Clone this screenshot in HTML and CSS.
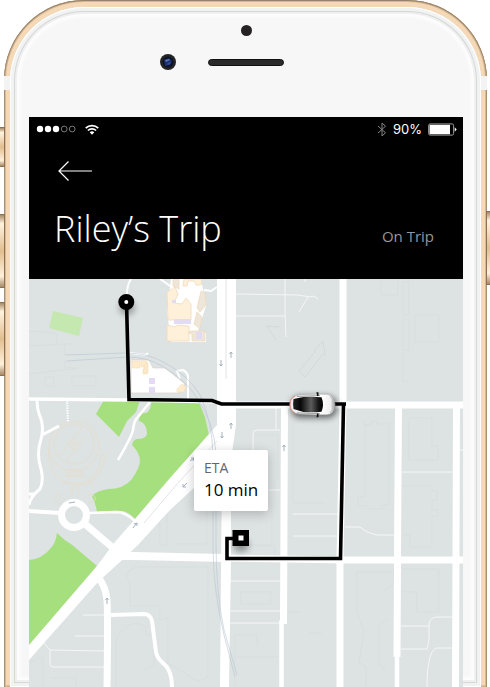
FILE: index.html

```html
<!DOCTYPE html>
<html lang="en">
<head>
<meta charset="utf-8">
<meta name="viewport" content="width=device-width, initial-scale=1">
<title>Riley’s Trip</title>
<link rel="stylesheet" href="styles.css">
</head>
<body>
<div class="device">
  <span class="key key-mute"></span>
  <span class="key key-up"></span>
  <span class="key key-down"></span>
  <span class="key key-power"></span>
  <span class="antenna antenna-left"></span>
  <span class="antenna antenna-right"></span>
  <div class="glass">
    <div class="bezel">
      <span class="sensor"></span>
      <svg class="camera" width="16" height="16" viewBox="0 0 16 16" aria-hidden="true">
        <circle cx="8" cy="8" r="8" fill="#242426"/>
        <circle cx="8" cy="8" r="5.4" fill="#0d1226"/>
        <path d="M4 6l5-2 3 3-2 4-5 1z" fill="#1c3070"/>
        <path d="M5 6l4-1 1 1-4 2z" fill="#5579ad"/>
        <path d="M7 10l3-2 1 1-3 2z" fill="#3551a8"/>
      </svg>
      <span class="speaker"></span>
    </div>
    <main class="screen">
      <header class="header">
        <div class="status">
          <svg width="40" height="8" viewBox="0 0 40 8" aria-label="Signal" role="img">
            <g fill="#fff"><circle cx="4" cy="4" r="3.2"/><circle cx="12" cy="4" r="3.2"/><circle cx="20" cy="4" r="3.2"/></g>
            <g fill="none" stroke="#aaa" stroke-width=".7"><circle cx="28.2" cy="4" r="2.9"/><circle cx="36.2" cy="4" r="2.9"/></g>
          </svg>
          <svg class="wifi" width="14" height="11" viewBox="0 0 14 11" aria-label="Wi-Fi" role="img">
            <g fill="none" stroke="#fff" stroke-width="1.7"><path d="M.7 4.1a9 9 0 0 1 12.6 0"/><path d="M2.9 6.5a6 6 0 0 1 8.2 0"/></g>
            <path d="M4.7 8.3a3.3 3.3 0 0 1 4.6 0L7 10.7z" fill="#fff"/>
          </svg>
          <svg class="bluetooth" width="10" height="15" viewBox="0 0 10 15" aria-label="Bluetooth" role="img">
            <path d="M1 4l7.5 6.8L5 14V1l3.5 3.2L1 11" fill="none" stroke="#858585" stroke-width="1"/>
          </svg>
          <span class="level">90%</span>
          <svg width="29" height="13" viewBox="0 0 29 13" aria-label="Battery" role="img">
            <rect x=".6" y=".9" width="25" height="11.2" rx="1.5" fill="none" stroke="#999" stroke-width="1"/>
            <rect x="1.5" y="1.8" width="20.5" height="9.4" fill="#fff"/>
            <path d="M26.7 4.3l2 2.2-2 2.2z" fill="#fff"/>
          </svg>
        </div>
        <button class="back" type="button" aria-label="Back">
          <svg width="36" height="22" viewBox="0 0 36 22" aria-hidden="true">
            <path d="M35 11H2M11.5 1.5L2 11l9.5 9.5" fill="none" stroke="#fff" stroke-width="1.2"/>
          </svg>
        </button>
        <div class="heading">
          <h1 class="title">Riley’s Trip</h1>
          <span class="state">On Trip</span>
        </div>
      </header>
      <section class="map" aria-label="Trip map">
        <svg class="map-art" viewBox="29 279 434 408" aria-hidden="true">
          <defs>
            <filter id="soft" x="-50%" y="-50%" width="200%" height="200%"><feGaussianBlur stdDeviation="3"/></filter>
            <linearGradient id="roof" x1="0" x2="1"><stop offset="0" stop-color="#222"/><stop offset=".25" stop-color="#080808"/><stop offset=".6" stop-color="#5c5c5c"/><stop offset=".85" stop-color="#161616"/><stop offset="1" stop-color="#000"/></linearGradient>
            <linearGradient id="body" x1="0" x2="1"><stop offset="0" stop-color="#eee"/><stop offset=".7" stop-color="#fff"/><stop offset=".9" stop-color="#eee"/><stop offset="1" stop-color="#999"/></linearGradient>
          </defs>
          <rect x="29" y="279" width="434" height="408" fill="#dde2e2"/>

          <!-- faint building outlines -->
          <g fill="none" stroke="#d6dcdc" stroke-width=".7">
            <path d="M29 331l27 2 1 11M29 346l36-2M75 344H65v12M75 368H65v-8M29 374l50-6M45 377h9v9h-9zM72 376h24v10H72z"/>
            <path d="M299 371l16-19-1-1 9-10 2 14-2-1-18 23zM276 340l-9-14 12 1" stroke="#cfd6d6"/>
            <path d="M381 280v15h17v-13M403 282h6v33h-6zM403 320h6v30h-6zM403 354v27h5M415 315h24v27h-24z"/>
            <path d="M365 425l6-1v-3h6v3h12v81h-7v4h-14v-3h-10v-9h7v-42zM409 418h23v28h6v14h-29zM402 486h30v5h5v9h-5v10h6v6h-6v31h-22v-12h-7"/>
            <path d="M293 421v82h32M362 421l3 4M256 435h22v45M199 501h8v43h-30M272 501v44h-30M167 445v100h-7v-60"/>
            <path d="M135 567h73v110q-10 8-20-2l-20-12v-45l-8 2v-14h-30v-22q-10-10 5-17M116 687v-45q3-10 10-15 10-7 20 0v8h8v30l-9 5M241 592h30v12h-30zM235 635h22v11M235 687v-52M235 657h43M255 546h20v12M366 687v-20l-7-5 5-30-7-20v-40h37v12l-10 6M402 569h37v43h-22v-20h-14M386 670l-7-5v-40l10-6M43 687v-30l-13 5M51 678h25v9M287 612h14M309 633h13"/>
          </g>

          <!-- parks -->
          <path d="M53 311l30 7-4 18-30-8z" fill="#c5e8b1"/>
          <g fill="#a6df7d">
            <path d="M104 400h36l-4 12-9 9-8 16-23-23z"/>
            <path d="M152 400h46l7 17 4 18-39 45-35 39q-6-7-12-8-12-1-26 1-1-8-5-16 4-5 16-7 16 0 24-10 8-12 8-18 0-8-8-16 1-5 5-6 9 0 10-5 0-11-8-13-1-3 4-8 8 2 9-16z"/>
            <path d="M57 533q8 8 14 11l26 22-68 80v-86q13-1 21-11 6-6 7-16z"/>
          </g>

          <!-- stadium -->
          <g fill="none" stroke="#e6ddcc" stroke-width=".8">
            <circle cx="74" cy="446" r="25"/><circle cx="74" cy="444" r="20"/><circle cx="74" cy="444" r="5"/><circle cx="74" cy="444" r="2"/>
            <path d="M49 449q-2 22 12 31 11 8 21 4 19-8 19-29h4q-1 19-17 28M60 455l22-27M66 461l21-25M68 470l-2 6h18l-4-6zM70 470v7m3-7v7m4-7v7m3-7v7M72 485v10M78 485v10M65 500q-7-8-10-3t10 8M84 498q8-8 12 1l-8 5M62 481l25 4 9-7"/>
          </g>

          <!-- campus buildings -->
          <path d="M171 279h30l3 15 2 12-8 25 8 2v9h-35l-4-30z" fill="#fff"/>
          <g fill="#fff0da" stroke="#efdabb" stroke-width=".8">
            <path d="M167 292l8-5 3 7-4 9 8 1 4-6 5 6v16h-23z"/><path d="M167 325l7 2 4-2 11 1v15h-22z"/>
            <path d="M184 279h18l-1 6h-5l-2-4h-6l-1 5h-4z"/>
          </g>
          <path d="M173 279v7l6 3v-10zM201 291l4 2 1 12-6 7-3-4zM197 312l5 5-2 12-6-5zM190 331h15v10h-13v-7l-4-1z" fill="#eee6d8" stroke="#efd8b8" stroke-width=".7"/>
          <path d="M174 319h17v5h-17zM196 332h6v7h-6zM172 300h4v3h-4z" fill="#e3daf3"/>
          <path d="M131 360h18l4 8h12l20 16-7 9h-47z" fill="#fff" stroke="#ddd3ca" stroke-width=".7"/>
          <g fill="#ffebcd" stroke="#f3ddbb" stroke-width=".6"><path d="M132 361h8v7h-8zM141 361h6v6h-6zM143 369h4v5h-4zM144 364l4-1v10h-4zM177 389l5-5 4 3-2 5h-7z"/></g>
          <path d="M149 378h6v6h-6zM149 387h6v6h-6z" fill="#e5daf5"/>

          <!-- side streets -->
          <g fill="none" stroke="#f5f7f7" stroke-width="1">
            <path d="M236 294l62 1 12 2 4-1 4 3M308 297l-9 15M285 279v34l1 24M236 316h49M305 279v3"/>
            <path d="M280 430h-23q-4 0-4 4v18M276 408v22M268 490h12M293 514h46M293 536h46M345 527h15l7 5 10 3h17M402 472h50M460 450h3"/>
            <path d="M230 581h50M230 611h50M230 623h50M401 626h28M452 617h-15q-6 0-8 6v17l-2 9h-26M452 648h-15q-6 1-8 14-2 7-2 25"/>
            <path d="M83 615h22M75 636h30M44 643l6 7 54 1M50 650v14q0 3 3 3h51"/>
          </g>
          <g fill="none" stroke="#fff" stroke-width="2">
            <path d="M131 279q-4 6-4 15M160 279l13 9M204 290l7 1 6-4M130 353l16 2 2-2M180 379l-3-8 6-1q4 2 5 6v24"/>
            <path d="M67 400l1 22" stroke-dasharray="1.5 1"/>
          </g>

          <!-- streets -->
          <g fill="none" stroke="#fff">
            <path d="M29 399l101 1 90 2" stroke-width="3.5"/>
            <path d="M37 400q0 10 4 19 3 10 0 20-5 15 0 30 3 12-1 20-10 8-11 16M42 435l17-9M29 494h6" stroke-width="3"/>
            <path d="M150 402l-13 16q-3 3-4 12-2 8-15 30M89 513l28-1q8 0 18 9" stroke-width="2.6"/>
            <path d="M29 511l32 2" stroke-width="4"/>
            <circle cx="74" cy="515" r="12.5" stroke-width="7"/>
            <path d="M85 524l34 29" stroke-width="7"/>
            <path d="M220 405h243M225 558l120 2h118" stroke-width="7"/>
            <path d="M115 556h18l92 2" stroke-width="8"/>
            <path d="M95 575q10 7 12 25 1 15 0 87" stroke-width="7"/>
            <path d="M110 615l34-1q6 0 8 7l4 31q1 6 7 11 9 7 9 24" stroke-width="4"/>
            <path d="M284.5 405L283.5 624M343 279v126l-3 155v127M398.5 405l-1 155-.5 97M456.5 405l-1 282" stroke-width="7"/>
            <path d="M281.5 620v67M397 655v32" stroke-width="4.5"/>
          </g>
          <path d="M217 279h19v146l-5 35v100l-2 127h-9l2-225-52 48-32 35-18 17-22 20-69 78v-15l68-79 17-23 21-24 35-41 47-53z" fill="#fff"/>
          <path d="M144 523l34-40 39-42M226 279v100" fill="none" stroke="#d9dedf" stroke-width=".8"/>

          <!-- railway -->
          <g fill="none" stroke="#b8c7d2" stroke-width=".8" opacity=".75">
            <path d="M65 355l60-2q24 0 40 10 24 13 35 32 12 25 13 60v90q0 45 11 90l11 42"/>
            <path d="M67 361l60-4q20 0 35 9 24 14 35 32 17 25 19 55v90q0 50 8 87l13 45"/>
          </g>
          <g fill="none" stroke="#a4b4bd" stroke-width="1">
            <path d="M221 360v6m-1.5-2l1.5 2 1.5-2M231 358v-6m-1.5 2l1.5-2 1.5 2M231 429v-6m-1.5 2l1.5-2 1.5 2M222 432v6m-1.500-2l1.500 2 1.500-2M284 451v-6m-1.500 2l1.500-2 1.500 2M107 604v-6m-1.500 2l1.500-2 1.500 2M190 461l4-3m-3 0l3 0-1 3M187 483l-4 4m0-3v3h3M133 528l4-5m-3 1l3-1v3M69 503l6-1"/>
          </g>

          <!-- route -->
          <ellipse cx="127" cy="308" rx="8" ry="7" fill="#000" opacity=".3" filter="url(#soft)"/>
          <ellipse cx="241" cy="545" rx="8" ry="7" fill="#000" opacity=".35" filter="url(#soft)"/>
          <path d="M126.500 302l2.500 97.500 83 1 9.500 3.500H346M343.500 404l-3 154.500H227v-20h14" fill="none" stroke="#000" stroke-width="3.600"/>
          <circle cx="126.300" cy="302" r="5" fill="#fff" stroke="#000" stroke-width="6"/>
          <path d="M232.500 530h16.500v16h-16.500z"/>
          <path d="M238.500 535.500h5v5h-5z" fill="#fff"/>

          <!-- car -->
          <rect x="291" y="396" width="46" height="22" rx="9" fill="#000" opacity=".55" filter="url(#soft)"/>
          <path d="M290 404.500q0-8.500 9-9.500l17-.8h11q8 1 8 10.300t-8 10.300h-11l-17-.8q-9-1-9-9.500z" fill="url(#body)" stroke="#aaa" stroke-width=".5"/>
          <path d="M295 396q-5 2.500-5 8.500t5 8.500" fill="none" stroke="#e08a70" stroke-width=".9"/>
          <path d="M293.500 399l10-2q9-.8 18 .2 3 7.300 0 14.600-9 1-18 .2l-10-3q-.8-5 0-10z" fill="url(#roof)"/>
          <path d="M297 396.500l23-1M297 412.800l23 1" stroke="#666" stroke-width=".6"/>
          <path d="M316.500 392l2 .5v3.500h-1.500zM316.500 417.500l2-.5v-3.500h-1.500z" fill="#111"/>
          <path d="M330 396q3.500 3 3.500 8.500t-3.500 8.500" fill="none" stroke="#bbb" stroke-width="1"/>
        </svg>
        <div class="eta">
          <span class="eta-label">ETA</span>
          <strong class="eta-value">10 min</strong>
        </div>
      </section>
    </main>
  </div>
</div>
</body>
</html>
```

FILE: styles.css

```css
* {
  box-sizing: border-box;
}

body {
  margin: 0;
  background: #fff;
  font-family: "Open Sans", "Noto Sans", sans-serif;
  overflow-x: hidden;
}

/* Phone shell */
.device {
  position: relative;
  min-height: 100vh;
  margin: 0 3px 0 4px;
  padding: 7px 6px 0;
  border-radius: 80px 80px 0 0;
  background: #f5d9b7;
  box-shadow: inset 0 1px 1px #927c64, inset 1px 0 1px #a58e72, inset -1px 0 1px #a58e72, inset 0 0 0 2px #dcbf9b;
}

.glass {
  min-height: calc(100vh - 7px);
  padding: 0 18px 0 19px;
  border-radius: 74px 74px 0 0;
  background: #f7f7f7;
  box-shadow: inset 0 0 0 1px #fff, inset 0 0 0 4px #f1f2f2, inset 0 0 0 5px #d5d7d8, inset 0 0 0 7px #f0f0f0, inset 0 0 3px 10px #fdfdfd;
}

.antenna {
  position: absolute;
  top: 76px;
  width: 6px;
  height: 14px;
  background: #f4f3f3;
}

.antenna-left {
  left: 0;
}

.antenna-right {
  right: 0;
}

.key {
  position: absolute;
  width: 5px;
  border: 1px solid #8b7254;
  background: linear-gradient(#a78a65, #fff3df 12%, #e2bf90 50%, #fff0dc 85%, #a78a65);
}

.key-mute {
  top: 127px;
  left: -4px;
  height: 40px;
  border-left: 0;
}

.key-up {
  top: 214px;
  left: -4px;
  height: 74px;
  border-left: 0;
}

.key-down {
  top: 302px;
  left: -4px;
  height: 74px;
  border-left: 0;
}

.key-power {
  top: 211px;
  right: -4px;
  height: 74px;
  border-right: 0;
}

.bezel {
  display: grid;
  grid-template-columns: 1fr 76px 1fr;
  column-gap: 32px;
  row-gap: 18px;
  align-items: center;
  height: 110px;
  padding-top: 18px;
  align-content: start;
}

.sensor {
  grid-column: 2;
  justify-self: center;
  width: 11px;
  height: 11px;
  border-radius: 50%;
  background: #262223;
}

.camera {
  grid-column: 1;
  justify-self: end;
}

.speaker {
  height: 7px;
  border: 1px solid #111;
  border-radius: 4px;
  background: #2b2b2b;
}

/* Header */
.header {
  height: 162px;
  background: #000;
  color: #fff;
}

.status {
  display: flex;
  align-items: center;
  height: 24px;
  padding: 0 6px 0 7px;
}

.wifi {
  margin-left: 9px;
}

.bluetooth {
  margin-left: auto;
}

.level {
  margin: 0 6px 0 6px;
  font: 13px/20px Inter, sans-serif;
}

.back {
  display: block;
  margin: 19px 0 0 28px;
  padding: 0;
  border: 0;
  background: none;
  cursor: pointer;
}

.back svg {
  display: block;
}

.heading {
  display: flex;
  align-items: baseline;
  justify-content: space-between;
  margin-top: 23px;
  padding: 0 29px 0 25px;
}

.title {
  margin: 0;
  font-size: 36px;
  font-weight: 300;
  line-height: 48px;
}

.state {
  color: #96969c;
  font-size: 15px;
}

/* Map */
.map {
  position: relative;
}

.map-art {
  display: block;
  width: 100%;
  height: auto;
}

.eta {
  position: absolute;
  top: 42%;
  left: 38%;
  display: flex;
  flex-direction: column;
  padding: 8px 10px 9px;
  border-radius: 2px;
  background: #fff;
  box-shadow: 0 3px 12px rgba(0, 0, 0, .22);
}

.eta-label {
  color: #62666f;
  font-size: 14px;
  line-height: 20px;
}

.eta-value {
  color: #000;
  font-size: 17px;
  font-weight: 400;
  line-height: 24px;
}
```
